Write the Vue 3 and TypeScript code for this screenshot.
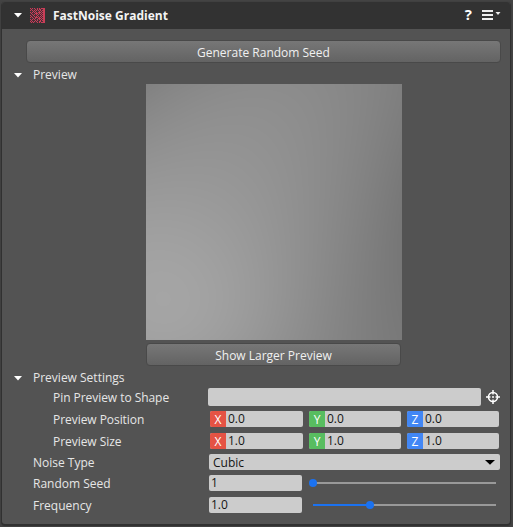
<script setup lang="ts">
import { onMounted, ref } from 'vue'

interface Axis {
  name: string
  tone: string
}

const axes: Axis[] = [
  { name: 'X', tone: 'red' },
  { name: 'Y', tone: 'green' },
  { name: 'Z', tone: 'blue' },
]
const position = ref<string[]>(['0.0', '0.0', '0.0'])
const size = ref<string[]>(['1.0', '1.0', '1.0'])

// 15x15 noise glyph, one character per pixel
const noise: string[] = [
  '#.#.#..#.#.####',
  '.#...#.#.##..##',
  '#.#.#.#.#.#.###',
  '...#.#...#.#.##',
  '#.#.#.#.###.###',
  '.#...###.#.#.##',
  '..#.#.#.#.#.###',
  '#..#...#...#.##',
  '.#..#.#.#.#.###',
  '#.#..###.#.#.##',
  '...#.#..###.###',
  '#.#.#..#.#.#.##',
  '.#...#.#..#.###',
  '#.#.#.#..##..##',
  '.#.#...#.#.####',
]
const noisePath = noise
  .map((row, y) => [...row].map((c, x) => (c === '#' ? `M${x} ${y}h1v1h-1z` : '')).join(''))
  .join('')

// Brightness samples of the noise field, interpolated smoothly over the canvas
const xs = [0, 1 / 3, 2 / 3, 1]
const ys = [0, 0.25, 0.5, 0.8, 1]
const samples = [
  [129, 139, 138, 127],
  [144, 147, 140, 123],
  [156, 153, 140, 119],
  [164, 158, 139, 119],
  [161, 155, 137, 121],
]

function weights(nodes: number[], t: number): number[] {
  return nodes.map((a, i) => nodes.reduce((w, b, j) => (i === j ? w : (w * (t - b)) / (a - b)), 1))
}

const canvas = ref<HTMLCanvasElement | null>(null)

onMounted(() => {
  const ctx = canvas.value?.getContext('2d')
  if (!ctx) return
  const image = ctx.createImageData(256, 256)
  const columns = Array.from({ length: 256 }, (_, x) => weights(xs, x / 255))
  for (let y = 0; y < 256; y++) {
    const wy = weights(ys, y / 255)
    const line = xs.map((_, i) => wy.reduce((sum, w, j) => sum + w * samples[j][i], 0))
    for (let x = 0; x < 256; x++) {
      const v = columns[x].reduce((sum, w, i) => sum + w * line[i], 0)
      image.data.set([v, v, v, 255], (y * 256 + x) * 4)
    }
  }
  ctx.putImageData(image, 0, 0)
})
</script>

<template>
  <main class="page">
    <section class="panel">
      <header class="head">
        <svg class="fold" width="8" height="5" viewBox="0 0 8 5"><path d="M0 0H8L4 4.500Z" fill="#fff" /></svg>
        <svg class="noise" width="15" height="15" viewBox="0 0 15 15" shape-rendering="crispEdges">
          <rect width="15" height="15" fill="#472f37" />
          <path :d="noisePath" fill="#c93e58" />
        </svg>
        <h1>FastNoise Gradient</h1>
        <span class="help">?</span>
        <svg class="menu" width="18" height="11" viewBox="0 0 18 11">
          <path d="M0 0h11v2H0zM0 4h11v2H0zM0 8h11v2H0z" fill="#eee" />
          <path d="M13.500 2H18.500L16 5Z" fill="#eee" />
        </svg>
      </header>

      <button class="btn wide">Generate Random Seed</button>
      <div class="row group first">
        <svg class="fold" width="8" height="5" viewBox="0 0 8 5"><path d="M0 0H8L4 4.500Z" fill="#fff" /></svg>
        <span>Preview</span>
      </div>
      <canvas ref="canvas" class="preview" width="256" height="256"></canvas>
      <button class="btn larger">Show Larger Preview</button>

      <div class="row group second">
        <svg class="fold" width="8" height="5" viewBox="0 0 8 5"><path d="M0 0H8L4 4.500Z" fill="#fff" /></svg>
        <span>Preview Settings</span>
      </div>
      <div class="row pin">
        <label class="sub">Pin Preview to Shape</label>
        <div class="field pinfield"></div>
        <svg class="target" width="14" height="14" viewBox="0 0 14 14">
          <circle cx="7" cy="7" r="4.500" fill="none" stroke="#fff" stroke-width="1.600" />
          <path d="M7 0v4.500M7 9.500v4.500M0 7h4.500M9.500 7h4.500" stroke="#fff" stroke-width="1.500" />
          <circle cx="7" cy="7" r="1" fill="#fff" />
        </svg>
      </div>
      <div class="row vec">
        <label class="sub">Preview Position</label>
        <div v-for="(axis, i) in axes" :key="axis.name" class="field axis">
          <b :class="axis.tone">{{ axis.name }}</b><span>{{ position[i] }}</span>
        </div>
      </div>
      <div class="row vec">
        <label class="sub">Preview Size</label>
        <div v-for="(axis, i) in axes" :key="axis.name" class="field axis">
          <b :class="axis.tone">{{ axis.name }}</b><span>{{ size[i] }}</span>
        </div>
      </div>
      <div class="row kind">
        <label>Noise Type</label>
        <div class="field select">
          <span>Cubic</span>
          <svg width="10" height="5" viewBox="0 0 10 5"><path d="M0 0H10L5 4.800Z" fill="#000" /></svg>
        </div>
      </div>
      <div class="row seed">
        <label>Random Seed</label>
        <div class="field num">1</div>
        <svg class="slider" width="187" height="8" viewBox="0 0 187 8">
          <path d="M4 3h183v2H4z" fill="#999" />
          <circle cx="4" cy="4" r="4" fill="#1b72f0" />
        </svg>
      </div>
      <div class="row freq">
        <label>Frequency</label>
        <div class="field num">1.0</div>
        <svg class="slider" width="187" height="8" viewBox="0 0 187 8">
          <path d="M4 3h183v2H4z" fill="#999" />
          <path d="M4 3h57v2H4z" fill="#1b72f0" />
          <circle cx="61" cy="4" r="4" fill="#1b72f0" />
        </svg>
      </div>
    </section>
  </main>
</template>

<style>
body {
  margin: 0;
  background: #434343;
}
</style>

<style scoped>
.page {
  box-sizing: border-box;
  width: 513px;
  height: 527px;
  padding: 2px 3px 3px 2px;
  overflow: hidden;
  background: #434343;
  color: #e6e6e6;
  font: 12px/16px "Open Sans", "Noto Sans", sans-serif;
}
.panel {
  height: 522px;
  background: #535353;
  border-radius: 3px;
  box-shadow: 0 1px 1px 1px #303030;
}
.head {
  display: flex;
  align-items: center;
  box-sizing: border-box;
  height: 27px;
  padding: 0 10px 0 12px;
  background: #323232;
  border-radius: 3px 3px 0 0;
}
.noise { margin-left: 8px; }
h1 {
  flex: 1;
  margin: 0 0 0 8px;
  color: #f4f4f4;
  font-size: 12px;
  font-weight: 700;
}
.help {
  margin-right: 10px;
  padding-bottom: 3px;
  color: #fff;
  font-size: 15px;
  font-weight: 700;
}
.menu { overflow: visible; }
.btn {
  display: block;
  box-sizing: border-box;
  height: 23px;
  padding: 0;
  border: 1px solid #494949;
  border-radius: 4px;
  background: linear-gradient(#777, #636363);
  color: #f0f0f0;
  font: inherit;
  line-height: 23px;
}
.wide {
  width: 475px;
  margin: 11px 0 0 24px;
}
.row {
  display: flex;
  align-items: center;
}
.group {
  height: 18px;
  padding-left: 12px;
}
.group span { margin-left: 11px; }
.first { margin-top: 3px; }
.preview {
  display: block;
  width: 256px;
  height: 256px;
  margin-left: 144px;
}
.larger {
  width: 255px;
  margin: 3px 0 0 144px;
}
.second { margin-top: 3px; }
label {
  box-sizing: border-box;
  width: 207px;
  padding: 2px 0 0 31px;
}
.sub {
  padding-left: 51px;
  letter-spacing: -0.050px;
}
.field {
  box-sizing: border-box;
  height: 16px;
  border-radius: 2px;
  background: #ccc;
  color: #151515;
  line-height: 16px;
}
.pin {
  height: 20px;
  margin-bottom: 1px;
}
.pinfield {
  width: 273px;
  height: 18px;
  margin-left: -1px;
}
.target { margin-left: 5px; }
.vec { height: 22px; }
.vec label { width: 208px; }
.axis {
  display: flex;
  width: 92px;
  margin-right: 6px;
  overflow: hidden;
}
.vec label + .axis { width: 93px; }
.axis b {
  width: 16px;
  color: #fff;
  font-weight: 400;
  line-height: 17px;
  text-align: center;
}
.axis span {
  margin-left: 2px;
  line-height: 15px;
}
.red { background: #e55344; }
.green { background: #58bd60; }
.blue { background: #4287f5; }
.kind { height: 20px; }
.select {
  display: flex;
  align-items: center;
  justify-content: space-between;
  width: 291px;
  padding: 0 5px 0 4px;
}
.select span { padding-top: 2px; }
.seed { height: 22px; }
.freq { height: 22px; }
.num {
  width: 93px;
  padding-left: 2px;
  line-height: 15px;
}
.slider { margin-left: 7px; }
</style>
